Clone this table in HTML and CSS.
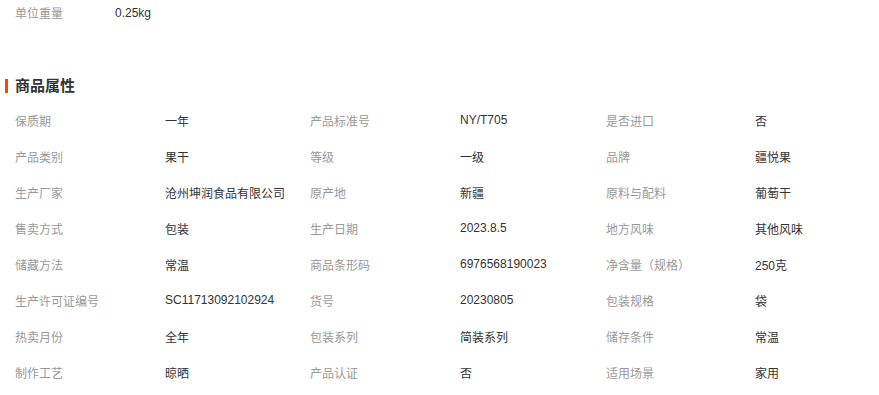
FILE: index.html
```html
<!DOCTYPE html>
<html lang="zh-CN">
<head>
<meta charset="utf-8">
<title>商品属性</title>
<link rel="stylesheet" href="styles.css">
</head>
<body>
<div class="page">
  <div class="weight-row">
    <span class="label w-label">单位重量</span>
    <span class="value">0.25kg</span>
  </div>
  <h2 class="section-title">商品属性</h2>
  <div class="attrs">
    <span class="label">保质期</span><span class="value">一年</span>
    <span class="label">产品标准号</span><span class="value">NY/T705</span>
    <span class="label">是否进口</span><span class="value">否</span>

    <span class="label">产品类别</span><span class="value">果干</span>
    <span class="label">等级</span><span class="value">一级</span>
    <span class="label">品牌</span><span class="value">疆悦果</span>

    <span class="label">生产厂家</span><span class="value">沧州坤润食品有限公司</span>
    <span class="label">原产地</span><span class="value">新疆</span>
    <span class="label">原料与配料</span><span class="value">葡萄干</span>

    <span class="label">售卖方式</span><span class="value">包装</span>
    <span class="label">生产日期</span><span class="value">2023.8.5</span>
    <span class="label">地方风味</span><span class="value">其他风味</span>

    <span class="label">储藏方法</span><span class="value">常温</span>
    <span class="label">商品条形码</span><span class="value">6976568190023</span>
    <span class="label">净含量（规格）</span><span class="value">250克</span>

    <span class="label">生产许可证编号</span><span class="value">SC11713092102924</span>
    <span class="label">货号</span><span class="value">20230805</span>
    <span class="label">包装规格</span><span class="value">袋</span>

    <span class="label">热卖月份</span><span class="value">全年</span>
    <span class="label">包装系列</span><span class="value">简装系列</span>
    <span class="label">储存条件</span><span class="value">常温</span>

    <span class="label">制作工艺</span><span class="value">晾晒</span>
    <span class="label">产品认证</span><span class="value">否</span>
    <span class="label">适用场景</span><span class="value">家用</span>
  </div>
</div>
</body>
</html>
```
FILE: styles.css
```css
html, body {
  margin: 0;
  padding: 0;
  background: #fff;
}
body {
  font-family: "Liberation Sans", "Noto Sans CJK SC", sans-serif;
  font-size: 12px;
  color: #333;
}
.page {
  width: 879px;
}
.weight-row {
  display: flex;
  align-items: center;
  height: 25px;
  padding-left: 15px;
}
.w-label {
  width: 100px;
}
.label {
  color: #999;
  white-space: nowrap;
}
.value {
  color: #333;
  white-space: nowrap;
}
.section-title {
  position: relative;
  margin: 49px 0 4px 0;
  padding-left: 15px;
  height: 24px;
  line-height: 24px;
  font-size: 15px;
  font-weight: bold;
  color: #333;
}
.section-title::before {
  content: "";
  position: absolute;
  left: 5px;
  top: 5px;
  width: 3px;
  height: 14px;
  background: #ff4400;
}
.attrs {
  display: grid;
  grid-template-columns: 150px 145px 150px 146px 149px 1fr;
  grid-auto-rows: 36px;
  align-items: center;
  padding-left: 15px;
}
```
